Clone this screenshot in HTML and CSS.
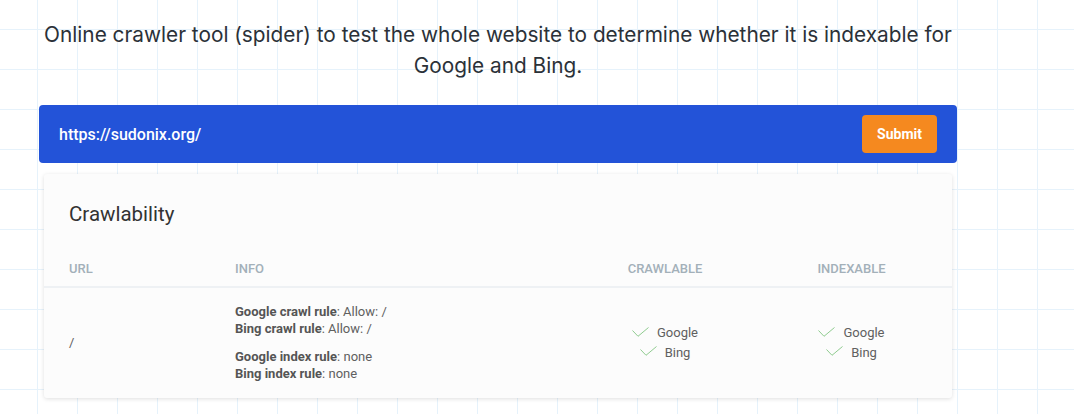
FILE: index.html
```html
<!DOCTYPE html>
<html lang="en">
<head>
<meta charset="utf-8">
<title>Crawler tool</title>
<link rel="stylesheet" href="styles.css">
</head>
<body>
<main class="wrap">
  <h1 class="lead">Online crawler tool (spider) to test the whole website to determine whether it is indexable for Google and Bing.</h1>

  <form class="search-bar">
    <span class="search-url">https://sudonix.org/</span>
    <button type="button" class="submit">Submit</button>
  </form>

  <section class="card">
    <h2 class="card-title">Crawlability</h2>
    <div class="table">
      <div class="row head">
        <div class="cell c-url">URL</div>
        <div class="cell c-info">Info</div>
        <div class="cell c-mid">Crawlable</div>
        <div class="cell c-mid">Indexable</div>
      </div>
      <div class="row body">
        <div class="cell c-url">/</div>
        <div class="cell c-info">
          <p class="rule"><b>Google crawl rule</b>: Allow: /<br><b>Bing crawl rule</b>: Allow: /</p>
          <p class="rule"><b>Google index rule</b>: none<br><b>Bing index rule</b>: none</p>
        </div>
        <div class="cell c-mid">
          <div class="engine"><svg class="check" viewBox="0 0 17 10" width="17" height="10"><polyline points="0.5,3.5 6,9.3 16.5,0.5"/></svg><span>Google</span></div>
          <div class="engine"><svg class="check" viewBox="0 0 17 10" width="17" height="10"><polyline points="0.5,3.5 6,9.3 16.5,0.5"/></svg><span>Bing</span></div>
        </div>
        <div class="cell c-mid">
          <div class="engine"><svg class="check" viewBox="0 0 17 10" width="17" height="10"><polyline points="0.5,3.5 6,9.3 16.5,0.5"/></svg><span>Google</span></div>
          <div class="engine"><svg class="check" viewBox="0 0 17 10" width="17" height="10"><polyline points="0.5,3.5 6,9.3 16.5,0.5"/></svg><span>Bing</span></div>
        </div>
      </div>
    </div>
  </section>
</main>
</body>
</html>
```

FILE: styles.css
```css
html, body {
  margin: 0;
  padding: 0;
}
body {
  width: 1074px;
  height: 414px;
  overflow: hidden;
  font-family: Roboto, "Liberation Sans", sans-serif;
  background-color: #ffffff;
  background-image:
    linear-gradient(to right, #e6f2fb 1px, transparent 1px),
    linear-gradient(to bottom, #e6f2fb 1px, transparent 1px);
  background-size: 40px 40px;
  background-position: 37px 29px;
}
.wrap {
  margin-left: 39px;
  width: 918px;
}
.lead {
  margin: 0;
  padding-top: 19px;
  font-family: Inter, "Noto Sans", sans-serif;
  font-weight: 400;
  font-size: 20.8px;
  line-height: 31px;
  color: #2b3138;
  text-align: center;
}
.search-bar {
  margin: 24px 0 0;
  height: 58px;
  box-sizing: border-box;
  display: flex;
  align-items: center;
  padding: 0 20px;
  background: #2353d8;
  border-radius: 4px;
}
.search-url {
  font-size: 16px;
  font-weight: 500;
  color: #ffffff;
}
.submit {
  margin-left: auto;
  width: 75px;
  height: 38px;
  border: 0;
  border-radius: 4px;
  background: #f5891f;
  color: #ffffff;
  font-family: Roboto, "Liberation Sans", sans-serif;
  font-size: 14px;
  font-weight: 700;
  padding: 0;
}
.card {
  margin: 11px 5px 0;
  background: #fcfcfc;
  border-radius: 3px;
  box-shadow: 0 1px 4px rgba(0, 0, 0, 0.13);
}
.card-title {
  margin: 0;
  padding: 28px 25px 0;
  font-size: 20.5px;
  font-weight: 400;
  line-height: 24px;
  color: #333333;
}
.table {
  margin-top: 25px;
}
.row {
  display: grid;
  grid-template-columns: 191px 344px 172px 1fr;
}
.row.head {
  height: 35px;
  align-items: center;
  border-bottom: 2px solid #eef1f4;
}
.head .cell {
  font-size: 13px;
  font-weight: 500;
  text-transform: uppercase;
  color: #a3b0b9;
}
.c-url {
  padding-left: 25px;
}
.c-mid {
  text-align: center;
}
.row.body {
  align-items: center;
  padding: 15px 0 16px;
}
.body .c-url {
  font-size: 13px;
  color: #5e5e5e;
}
.rule {
  margin: 0;
  font-size: 13px;
  line-height: 17.3px;
  color: #606060;
}
.rule + .rule {
  margin-top: 10px;
}
.rule b {
  font-weight: 700;
  color: #555555;
}
.engine {
  display: flex;
  justify-content: center;
  align-items: center;
  gap: 8px;
  font-size: 13px;
  line-height: 19.5px;
  color: #606060;
}
.check {
  display: block;
  margin-top: -2px;
}
.check polyline {
  fill: none;
  stroke: #8fcb8f;
  stroke-width: 1;
}
```
